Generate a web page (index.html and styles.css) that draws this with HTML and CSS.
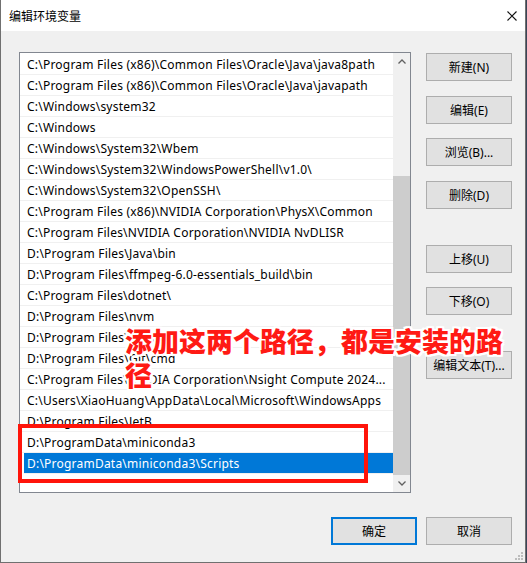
FILE: index.html
```html
<!DOCTYPE html>
<html lang="zh-CN">
<head>
<meta charset="utf-8">
<title>编辑环境变量</title>
<link rel="stylesheet" href="styles.css">
</head>
<body>
<div class="window">
  <div class="titlebar">
    <span class="title">编辑环境变量</span>
    <svg class="close" width="10" height="10" viewBox="0 0 10 10"><path d="M0.5 0.5L9.5 9.5M9.5 0.5L0.5 9.5" stroke="#111" stroke-width="1.1" fill="none"/></svg>
  </div>
  <div class="client">
    <div class="main">
      <div class="listbox">
        <div class="rows">
          <div class="row">C:\Program Files (x86)\Common Files\Oracle\Java\java8path</div>
          <div class="row">C:\Program Files (x86)\Common Files\Oracle\Java\javapath</div>
          <div class="row">C:\Windows\system32</div>
          <div class="row">C:\Windows</div>
          <div class="row">C:\Windows\System32\Wbem</div>
          <div class="row">C:\Windows\System32\WindowsPowerShell\v1.0\</div>
          <div class="row">C:\Windows\System32\OpenSSH\</div>
          <div class="row">C:\Program Files (x86)\NVIDIA Corporation\PhysX\Common</div>
          <div class="row">C:\Program Files\NVIDIA Corporation\NVIDIA NvDLISR</div>
          <div class="row">D:\Program Files\Java\bin</div>
          <div class="row">D:\Program Files\ffmpeg-6.0-essentials_build\bin</div>
          <div class="row">C:\Program Files\dotnet\</div>
          <div class="row">D:\Program Files\nvm</div>
          <div class="row">D:\Program Files\nodejs\</div>
          <div class="row">D:\Program Files\Git\cmd</div>
          <div class="row">C:\Program Files\NVIDIA Corporation\Nsight Compute 2024...</div>
          <div class="row">C:\Users\XiaoHuang\AppData\Local\Microsoft\WindowsApps</div>
          <div class="row">D:\Program Files\JetB</div>
          <div class="row">D:\ProgramData\miniconda3</div>
          <div class="row sel">D:\ProgramData\miniconda3\Scripts</div>
        </div>
        <div class="scrollbar">
          <div class="sb-arrow"><svg width="8" height="5" viewBox="0 0 8 5"><path d="M0.5 4.5L4 1L7.5 4.5" stroke="#606060" stroke-width="1.3" fill="none"/></svg></div>
          <div class="sb-track"><div class="sb-thumb"></div></div>
          <div class="sb-arrow"><svg width="8" height="5" viewBox="0 0 8 5"><path d="M0.5 0.5L4 4L7.5 0.5" stroke="#606060" stroke-width="1.3" fill="none"/></svg></div>
        </div>
      </div>
      <div class="side">
        <div class="btn">新建(N)</div>
        <div class="btn g15">编辑(E)</div>
        <div class="btn g14">浏览(B)...</div>
        <div class="btn g15">删除(D)</div>
        <div class="btn g36">上移(U)</div>
        <div class="btn g14">下移(O)</div>
        <div class="btn g36">编辑文本(T)...</div>
      </div>
    </div>
    <div class="footer">
      <div class="btn default">确定</div>
      <div class="btn">取消</div>
    </div>
  </div>
  <svg class="grip" width="8" height="8" viewBox="0 0 8 8">
    <rect x="6" y="0" width="2" height="2" fill="#bdbdbd"/>
    <rect x="3" y="3" width="2" height="2" fill="#bdbdbd"/>
    <rect x="6" y="3" width="2" height="2" fill="#bdbdbd"/>
    <rect x="0" y="6" width="2" height="2" fill="#bdbdbd"/>
    <rect x="3" y="6" width="2" height="2" fill="#bdbdbd"/>
    <rect x="6" y="6" width="2" height="2" fill="#bdbdbd"/>
  </svg>
  <div class="annot-box"></div>
  <div class="annot-text">添加这两个路径，都是安装的路<br>径</div>
</div>
</body>
</html>
```
FILE: styles.css
```css
html, body {
  margin: 0;
  padding: 0;
  background: #3a4457;
}
.window {
  position: relative;
  width: 526px;
  height: 563px;
  box-sizing: border-box;
  border: 1px solid #707070;
  border-top: none;
  background: #f0f0f0;
  display: flex;
  flex-direction: column;
  font-family: "Noto Sans", "Noto Sans CJK SC", sans-serif;
  font-size: 12px;
  color: #000;
}
.titlebar {
  flex: none;
  height: 31px;
  background: #fff;
  display: flex;
  align-items: center;
  justify-content: space-between;
  padding: 0 8px 0 8px;
}
.title {
  font-family: "Noto Sans CJK SC", sans-serif;
  font-size: 12px;
}
.close {
  display: block;
}
.client {
  flex: 1;
  display: flex;
  flex-direction: column;
  padding: 21px 13px 0 18px;
}
.main {
  display: flex;
  align-items: flex-start;
  gap: 15px;
}
.listbox {
  width: 392px;
  height: 441px;
  box-sizing: border-box;
  border: 1px solid #828790;
  background: #fff;
  display: flex;
}
.rows {
  flex: 1;
  min-width: 0;
  padding-top: 1px;
}
.row {
  height: 20px;
  line-height: 21px;
  border-bottom: 1px solid #f0f0f0;
  padding-left: 7px;
  white-space: nowrap;
  overflow: hidden;
  letter-spacing: 0.22px;
}
.row.sel {
  background: #0078d7;
  color: #fff;
  margin-left: 4px;
  padding-left: 3px;
}
.scrollbar {
  flex: none;
  width: 17px;
  background: #f0f0f0;
  display: flex;
  flex-direction: column;
}
.sb-arrow {
  flex: none;
  height: 17px;
  display: flex;
  align-items: center;
  justify-content: center;
}
.sb-track {
  flex: 1;
  display: flex;
  flex-direction: column;
  justify-content: flex-end;
}
.sb-thumb {
  height: 299px;
  background: #cdcdcd;
}
.side {
  display: flex;
  flex-direction: column;
  padding-top: 1px;
}
.btn {
  width: 86px;
  height: 28px;
  box-sizing: border-box;
  border: 1px solid #adadad;
  background: #e1e1e1;
  display: flex;
  align-items: center;
  justify-content: center;
  white-space: nowrap;
}
.btn.default {
  border: 2px solid #0078d7;
}
.g14 { margin-top: 14px; }
.g15 { margin-top: 15px; }
.g36 { margin-top: 36px; }
.footer {
  display: flex;
  justify-content: flex-end;
  gap: 9px;
  margin-top: 24px;
}
.grip {
  position: absolute;
  right: 2px;
  bottom: 2px;
}
.annot-box {
  position: absolute;
  left: 17px;
  top: 424px;
  width: 350px;
  height: 59px;
  box-sizing: border-box;
  border: 4px solid #ff140a;
}
.annot-text {
  position: absolute;
  left: 124px;
  top: 324px;
  font-family: "Noto Sans CJK SC", sans-serif;
  font-weight: 900;
  font-size: 27px;
  line-height: 34px;
  color: #ff1a14;
  white-space: nowrap;
  text-shadow:
    2px 0 0 #fff, -2px 0 0 #fff, 0 2px 0 #fff, 0 -2px 0 #fff,
    2px 2px 0 #fff, -2px -2px 0 #fff, 2px -2px 0 #fff, -2px 2px 0 #fff,
    1px 0 0 #fff, -1px 0 0 #fff, 0 1px 0 #fff, 0 -1px 0 #fff;
}
```
